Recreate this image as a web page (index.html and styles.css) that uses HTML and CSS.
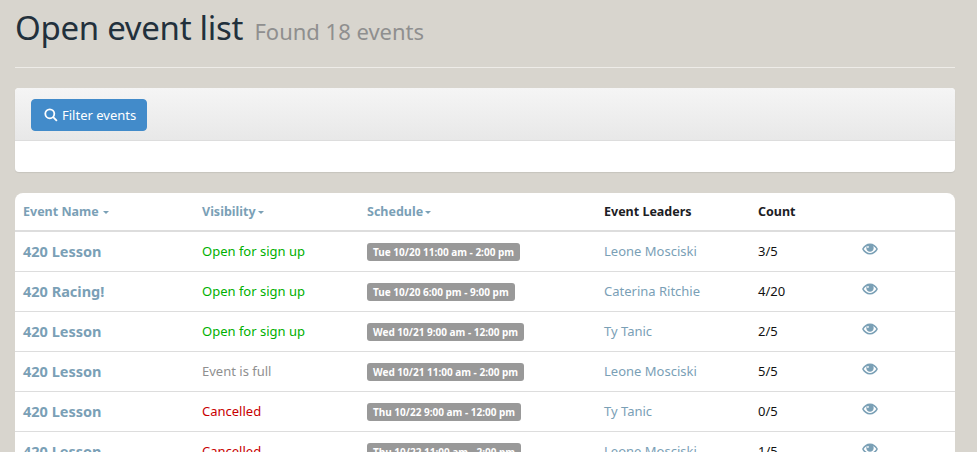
FILE: index.html
```html
<!DOCTYPE html>
<html lang="en">
<head>
<meta charset="utf-8">
<title>Open event list</title>
<link rel="stylesheet" href="styles.css">
</head>
<body>
<svg class="defs" width="0" height="0" aria-hidden="true">
  <symbol id="eye" viewBox="0 0 16 12">
    <path fill-rule="evenodd" d="M8 .6C4.6.6 1.8 2.7.3 5.6c-.1.3-.1.6 0 .8 1.5 2.9 4.3 5 7.7 5s6.200-2.100 7.700-5c.1-.2.1-.5 0-.8C14.200 2.700 11.400.6 8 .6zM8 9.900c-2.400 0-4.900-1.500-6.300-3.900.8-1.300 1.900-2.400 3.200-3.100-.4.600-.6 1.300-.6 2.100 0 2.100 1.700 3.700 3.700 3.700s3.700-1.600 3.700-3.700c0-.8-.2-1.500-.6-2.100 1.300.7 2.400 1.800 3.200 3.100C12.900 8.400 10.400 9.900 8 9.900zM6 3.100c.5 0 .9.400.9.900s-.4.900-.9.900-.9-.4-.9-.9.400-.9.900-.9z"/>
  </symbol>
</svg>
<header class="page-header">
  <h1>Open event list <small>Found 18 events</small></h1>
</header>
<section class="panel">
  <div class="panel-heading">
    <button class="btn" type="button">
      <svg class="btn-icon" viewBox="0 0 14 14" aria-hidden="true"><circle cx="5.800" cy="5.800" r="4.500"/><path d="M9.200 9.200l3.700 3.700"/></svg>
      Filter events
    </button>
  </div>
  <div class="panel-body"></div>
</section>
<section class="card">
  <table>
    <colgroup>
      <col class="c1"><col class="c2"><col class="c3"><col class="c4"><col class="c5"><col class="c6">
    </colgroup>
    <thead>
      <tr>
        <th class="sort">Event Name<span class="caret"></span></th>
        <th class="sort">Visibility<span class="caret tight"></span></th>
        <th class="sort">Schedule<span class="caret tight"></span></th>
        <th>Event Leaders</th>
        <th>Count</th>
        <th></th>
      </tr>
    </thead>
    <tbody>
      <tr>
        <td><a class="name">420 Lesson</a></td><td class="open">Open for sign up</td>
        <td><span class="label">Tue 10/20 11:00 am - 2:00 pm</span></td>
        <td><a class="leader">Leone Mosciski</a></td><td>3/5</td>
        <td><svg class="eye"><use href="#eye"/></svg></td>
      </tr>
      <tr>
        <td><a class="name">420 Racing!</a></td><td class="open">Open for sign up</td>
        <td><span class="label">Tue 10/20 6:00 pm - 9:00 pm</span></td>
        <td><a class="leader">Caterina Ritchie</a></td><td>4/20</td>
        <td><svg class="eye"><use href="#eye"/></svg></td>
      </tr>
      <tr>
        <td><a class="name">420 Lesson</a></td><td class="open">Open for sign up</td>
        <td><span class="label">Wed 10/21 9:00 am - 12:00 pm</span></td>
        <td><a class="leader">Ty Tanic</a></td><td>2/5</td>
        <td><svg class="eye"><use href="#eye"/></svg></td>
      </tr>
      <tr>
        <td><a class="name">420 Lesson</a></td><td class="full">Event is full</td>
        <td><span class="label">Wed 10/21 11:00 am - 2:00 pm</span></td>
        <td><a class="leader">Leone Mosciski</a></td><td>5/5</td>
        <td><svg class="eye"><use href="#eye"/></svg></td>
      </tr>
      <tr>
        <td><a class="name">420 Lesson</a></td><td class="cancelled">Cancelled</td>
        <td><span class="label">Thu 10/22 9:00 am - 12:00 pm</span></td>
        <td><a class="leader">Ty Tanic</a></td><td>0/5</td>
        <td><svg class="eye"><use href="#eye"/></svg></td>
      </tr>
      <tr>
        <td><a class="name">420 Lesson</a></td><td class="cancelled">Cancelled</td>
        <td><span class="label">Thu 10/22 11:00 am - 2:00 pm</span></td>
        <td><a class="leader">Leone Mosciski</a></td><td>1/5</td>
        <td><svg class="eye"><use href="#eye"/></svg></td>
      </tr>
    </tbody>
  </table>
</section>
</body>
</html>
```

FILE: styles.css
```css
* { box-sizing: border-box; }
html { height: 100%; }
body {
  margin: 0;
  padding: 0 22px 0 15px;
  height: 452px;
  overflow: hidden;
  background-color: #d8d5ce;
  font-family: "Noto Sans", "Liberation Sans", sans-serif;
  font-size: 13px;
  line-height: 20px;
  color: #111;
}
.defs { display: block; height: 0; }
.page-header {
  height: 68px;
  border-bottom: 1px solid #eeece8;
  margin-bottom: 20px;
  padding-top: 7px;
}
h1 {
  margin: 0;
  font-size: 33px;
  line-height: 42px;
  font-weight: 400;
  color: #22303c;
  letter-spacing: -0.3px;
}
h1 small {
  font-size: 22px;
  color: #8f8f8f;
  letter-spacing: 0;
  margin-left: 3px;
}
.panel {
  height: 84px;
  background: #fff;
  border-radius: 4px;
  box-shadow: 0 1px 1px rgba(0,0,0,.08);
  margin-bottom: 21px;
  overflow: hidden;
}
.panel-heading {
  height: 53px;
  padding: 11px 16px;
  background: linear-gradient(#f5f5f5, #e8e8e8);
  border-bottom: 1px solid #ddd;
}
.btn {
  display: flex;
  align-items: center;
  gap: 4px;
  width: 116px;
  height: 32px;
  padding: 0 12px;
  border: 1px solid #428bca;
  border-radius: 4px;
  background: #428bca;
  color: #fff;
  font: inherit;
  white-space: nowrap;
}
.btn-icon {
  width: 14px;
  height: 14px;
  flex: none;
  fill: none;
  stroke: #fff;
  stroke-width: 1.800;
}
.card {
  background: #fff;
  border-radius: 8px 8px 0 0;
  overflow: hidden;
}
table {
  width: 100%;
  table-layout: fixed;
  border-collapse: collapse;
}
.c1 { width: 179px; }
.c2 { width: 165px; }
.c3 { width: 237px; }
.c4 { width: 154px; }
.c5 { width: 104px; }
th {
  height: 38px;
  padding: 0 8px;
  text-align: left;
  font-weight: 700;
  font-size: 12.5px;
  color: #1c2024;
  border-bottom: 2px solid #ddd;
  white-space: nowrap;
}
th.sort { color: #7aa0b6; }
.caret {
  display: inline-block;
  margin-left: 4px;
  vertical-align: middle;
  border-top: 3px solid #7aa0b6;
  border-left: 3px solid transparent;
  border-right: 3px solid transparent;
}
.caret.tight { margin-left: 2px; }
td {
  height: 40px;
  padding: 0 8px;
  border-bottom: 1px solid #ddd;
  white-space: nowrap;
}
.name { font-size: 14.500px; font-weight: 700; color: #7aa0b6; }
.leader { color: #7aa0b6; }
.open { color: #00b000; }
.full { color: #8f8f8f; }
.cancelled { color: #c80000; }
.label {
  display: inline-block;
  padding: 0 6px;
  height: 18px;
  line-height: 18px;
  border-radius: 3px;
  background: #999;
  color: #fff;
  font-size: 10px;
  font-weight: 700;
}
.eye {
  display: block;
  width: 16px;
  height: 12px;
  margin-bottom: 5px;
  fill: #7aa0b6;
}
```
